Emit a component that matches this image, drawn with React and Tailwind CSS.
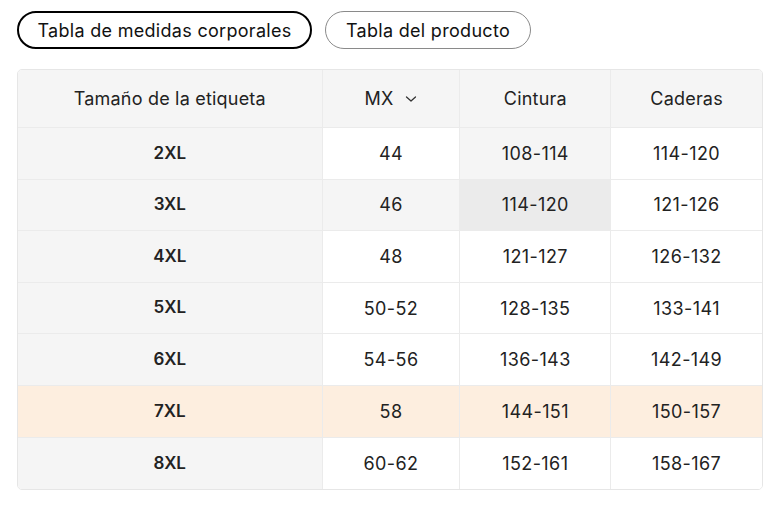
import React from "react";

const rows = [
  ["2XL", "44", "108-114", "114-120"],
  ["3XL", "46", "114-120", "121-126"],
  ["4XL", "48", "121-127", "126-132"],
  ["5XL", "50-52", "128-135", "133-141"],
  ["6XL", "54-56", "136-143", "142-149"],
  ["7XL", "58", "144-151", "150-157"],
  ["8XL", "60-62", "152-161", "158-167"],
];

const widths = ["w-[305px]", "w-[138px]", "w-[151px]", "w-[151px]"];

function cellBg(r, c) {
  if (r === 5) return "bg-[#fdeedf]";
  if (c === 0) return "bg-[#f5f5f5]";
  if (r === 1 && c === 2) return "bg-[#ebebeb]";
  if (r === 1 && c === 1) return "bg-[#f5f5f5]";
  if (r === 0 && c === 2) return "bg-[#f5f5f5]";
  return "bg-white";
}

export default function App() {
  return (
    <div className="w-[780px] h-[508px] bg-white text-[#222] px-[17px] pt-[11px]" style={{ fontFamily: "Inter, 'Noto Sans', sans-serif" }}>
      <div className="flex gap-[13px]">
        <button className="h-[38px] pt-[1px] rounded-full border-2 border-black text-[18px] tracking-[0.3px] text-[#111] w-[295px] flex items-center justify-center">
          Tabla de medidas corporales
        </button>
        <button className="h-[38px] pt-[1px] rounded-full border border-[#8a8a8a] text-[18px] tracking-[0.3px] text-[#111] w-[206px] flex items-center justify-center">
          Tabla del producto
        </button>
      </div>
      <div className="mt-[20px] w-[746px] border border-[#e6e6e6] rounded-[5px] overflow-hidden">
        <div className="flex h-[58px] bg-[#f5f5f5] border-b border-[#ebebeb]">
          {["Tamaño de la etiqueta", "MX", "Cintura", "Caderas"].map((h, i) => (
            <div key={i} className={`${widths[i]} flex items-center justify-center text-[18px] tracking-[0.2px] ${i < 3 ? "border-r border-[#ebebeb]" : ""}`}>
              {h}
              {i === 1 && (
                <svg className="ml-[12px] mt-[1px]" width="12" height="8" viewBox="0 0 12 8" fill="none">
                  <path d="M1.5 2L6 6L10.5 2" stroke="#333" strokeWidth="1.3" strokeLinecap="round" strokeLinejoin="round" />
                </svg>
              )}
            </div>
          ))}
        </div>
        {rows.map((row, r) => (
          <div key={r} className={`flex h-[51.6px] ${r < rows.length - 1 ? "border-b border-[#ebebeb]" : ""}`}>
            {row.map((v, c) => (
              <div key={c} className={`${widths[c]} ${cellBg(r, c)} flex items-center justify-center ${c === 0 ? "font-semibold text-[17px]" : "text-[18px] tracking-[0.4px]"} ${c < 3 ? "border-r border-[#ebebeb]" : ""}`}>
                {v}
              </div>
            ))}
          </div>
        ))}
      </div>
    </div>
  );
}
